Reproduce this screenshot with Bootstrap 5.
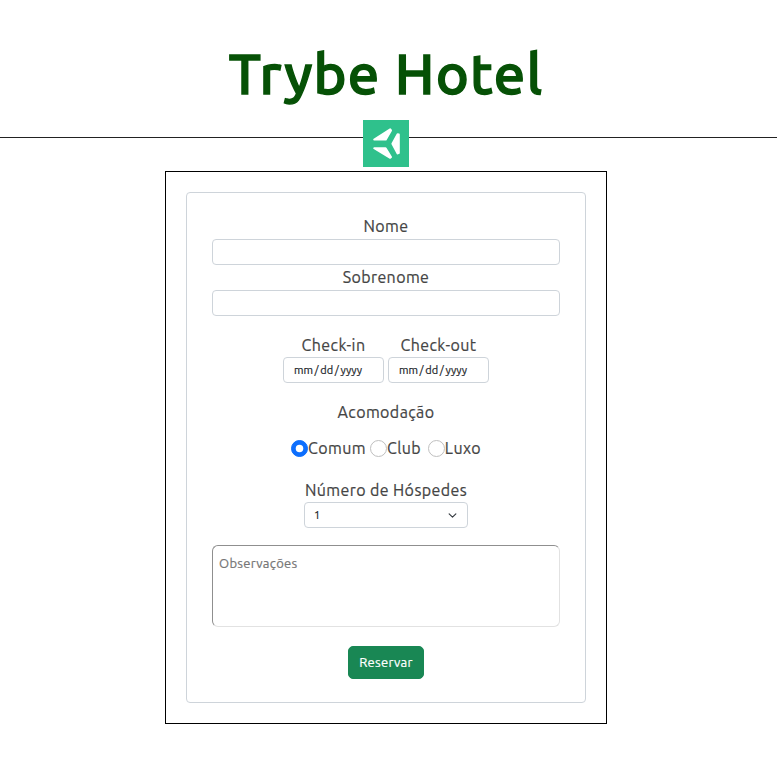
<!DOCTYPE html>
<html lang="pt-BR">
<head>
<meta charset="utf-8">
<meta name="viewport" content="width=device-width, initial-scale=1">
<title>Trybe Hotel</title>
<link href="https://cdn.jsdelivr.net/npm/bootstrap@5.3.0/dist/css/bootstrap.min.css" rel="stylesheet">
<style>
  body { font-family: Ubuntu, "Noto Sans", sans-serif; font-size: 16px; line-height: 25px; color: #444; letter-spacing: .4px; -webkit-text-stroke: .2px; }
  .page { width: 772px; }
  .hotel-title { font-size: 56px; font-weight: 500; line-height: 68px; color: #065106; padding-top: 40px; letter-spacing: 1.2px; -webkit-text-stroke: 1.4px #065106; }
  .brand-rule { width: 777px; height: 47px; margin-top: 12px; padding-right: 5px;
    background: linear-gradient(#222, #222) 0 17px / 100% 1px no-repeat; }
  .brand-rule svg { width: 46px; height: 47px; }
  .form-frame { width: 442px; height: 553px; margin-top: 4px; padding: 20px; border: 1px solid #000; }
  .form-box { height: 511px; padding: 21px 25px 0; border: 1px solid #ced4da; border-radius: 4px; }
  .field-sm { height: 26px; min-height: 26px; padding: 0 10px; font-size: 11px; line-height: 24px; border: 1px solid #ced4da; border-radius: 4px; color: #212529; }
  .dates { margin-top: 17px; gap: 4px; }
  .dates label, .guests label { margin-bottom: -1px; }
  .dates .field-sm { width: 101px; letter-spacing: -.1px; }
  .field-sm::-webkit-datetime-edit-text { padding: 0 1.8px; }
  .field-sm::-webkit-calendar-picker-indicator { display: none; }
  .rooms { margin-top: 17px; }
  .rooms .options { margin-top: 11px; height: 25px; width: 190px; }
  .rooms .form-check-input { width: 17px; height: 17px; margin: 0; border-color: #bfbfbf; flex: none; }
  .rooms .form-check-input:checked { border-color: #0d6efd; }
  .rooms .room-first { width: 79px; }
  .rooms .room-second { width: 58px; }
  .guests { width: 164px; margin: 17px auto 0; }
  .guests .field-sm { padding-left: 9px; background-position: right 10px center; background-size: 9px 9px; }
  .notes { height: 82px; margin-top: 17px; padding: 5px 6px; font-size: 13px; line-height: 24px; resize: none; letter-spacing: .3px;
    border: 1px solid; border-color: #8f8f8f #e2e2e2 #e2e2e2 #8f8f8f; border-radius: 6px; }
  .notes::placeholder { color: #757575; }
  .btn-book { width: 76px; height: 33px; margin-top: 19px; padding: 0; font-size: 13px; border-radius: 5px; letter-spacing: .3px; }
  .field-sm, .notes, .btn-book { -webkit-text-stroke: .2px; }
</style>
</head>
<body>
<div class="page text-center">
  <h1 class="hotel-title mb-0">Trybe Hotel</h1>
  <div class="brand-rule d-flex justify-content-center">
    <svg viewBox="0 0 46 47" aria-label="Trybe">
      <rect width="46" height="47" fill="#2fc18c"/>
      <g fill="#fff" stroke="#fff" stroke-width="2" stroke-linejoin="round">
        <path d="M11.2 19.5 27.2 9.3 28 10.4 22.8 19.6Z"/>
        <path d="M11.2 28.2H22.6L28 37 27.2 37.8Z"/>
        <path d="M29.4 23.8 34.6 14.2 35.8 14.5V33L34.6 33.4Z"/>
      </g>
    </svg>
  </div>
  <main class="form-frame mx-auto">
    <form class="form-box">
      <div><label class="d-block" for="nome">Nome</label><input id="nome" class="form-control field-sm"></div>
      <div><label class="d-block" for="sobrenome">Sobrenome</label><input id="sobrenome" class="form-control field-sm"></div>
      <div class="dates d-flex justify-content-center">
        <div><label class="d-block" for="entrada">Check-in</label><input type="date" lang="en-US" id="entrada" class="form-control field-sm"></div>
        <div><label class="d-block" for="saida">Check-out</label><input type="date" lang="en-US" id="saida" class="form-control field-sm"></div>
      </div>
      <div class="rooms">
        <div>Acomodação</div>
        <div class="options d-flex align-items-center mx-auto">
          <label class="room-first d-flex align-items-center"><input class="form-check-input" type="radio" name="quarto" checked>Comum</label>
          <label class="room-second d-flex align-items-center"><input class="form-check-input" type="radio" name="quarto">Club</label>
          <label class="d-flex align-items-center"><input class="form-check-input" type="radio" name="quarto">Luxo</label>
        </div>
      </div>
      <div class="guests">
        <label class="d-block text-nowrap" for="hospedes">Número de Hóspedes</label>
        <select id="hospedes" class="form-select field-sm"><option>1</option><option>2</option><option>3</option></select>
      </div>
      <textarea class="notes d-block w-100" placeholder="Observações"></textarea>
      <button type="button" class="btn btn-success btn-book">Reservar</button>
    </form>
  </main>
</div>
<script src="https://cdn.jsdelivr.net/npm/bootstrap@5.3.0/dist/js/bootstrap.bundle.min.js"></script>
</body>
</html>
